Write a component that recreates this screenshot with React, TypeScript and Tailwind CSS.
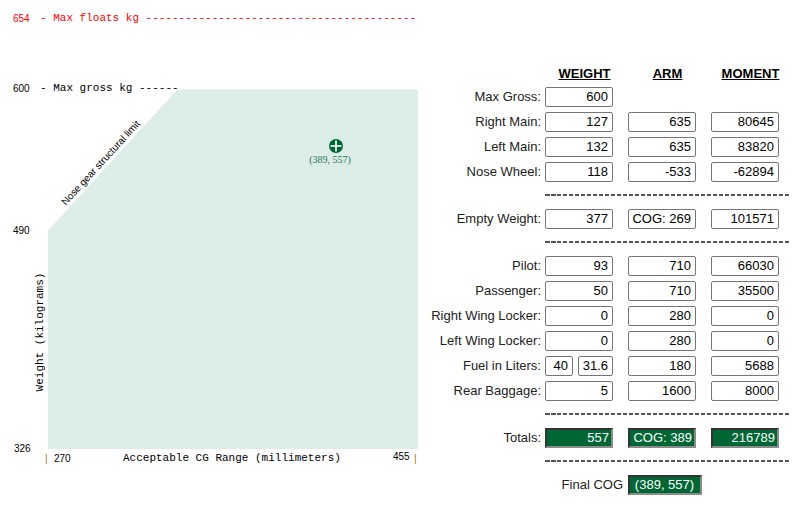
import React from "react";

const sans = "font-['Liberation_Sans',Arial,sans-serif]";
const mono = "font-['Liberation_Mono','Courier_New',monospace]";

function Box({ v, w = "w-[68px]" }: { v: string; w?: string }) {
  return (
    <div
      className={`${w} h-[20px] box-border border border-[#767676] rounded-[2px] bg-white text-right pr-[4px] text-[13px] leading-[18px] text-black whitespace-nowrap`}
    >
      {v}
    </div>
  );
}

function GreenBox({ v, w = "w-[68px]", align = "text-right" }: { v: string; w?: string; align?: string }) {
  return (
    <div
      className={`${w} h-[20px] box-border border-2 border-t-[#333] border-l-[#333] border-r-[#8c8c8c] border-b-[#8c8c8c] bg-[#006633] ${align} pl-[1px] pr-[2px] text-[13px] leading-[16px] text-white whitespace-nowrap overflow-hidden`}
    >
      {v}
    </div>
  );
}

function Row({ label, children }: { label: string; children: React.ReactNode }) {
  return (
    <div className="flex h-[25px] items-center">
      <div className="w-[124px] pr-[4px] text-right text-[13px] text-[#222]">{label}</div>
      {children}
    </div>
  );
}

function Cell({ children }: { children?: React.ReactNode }) {
  return <div className="w-[83px] flex">{children}</div>;
}

function Dash() {
  return (
    <div className="h-[22px] flex items-center">
      <div className="ml-[124px] w-[245px] h-[2px] bg-[repeating-linear-gradient(to_right,#555_0px,#555_4.5px,transparent_4.5px,transparent_6px)]" />
    </div>
  );
}

const rows1: [string, string, string, string][] = [
  ["Right Main:", "127", "635", "80645"],
  ["Left Main:", "132", "635", "83820"],
  ["Nose Wheel:", "118", "-533", "-62894"],
];

const rows2: [string, string, string, string][] = [
  ["Pilot:", "93", "710", "66030"],
  ["Passenger:", "50", "710", "35500"],
  ["Right Wing Locker:", "0", "280", "0"],
  ["Left Wing Locker:", "0", "280", "0"],
];

function Chart() {
  return (
    <div className={`relative w-[421px] h-[520px] shrink-0 ${sans}`}>
      <svg className="absolute inset-0" width="421" height="520" viewBox="0 0 421 520">
        <polygon points="48,449 48,230.5 177.5,89.5 418,89.5 418,449" fill="#ddede8" />
        <circle cx="336" cy="146" r="7" fill="#006633" />
        <line x1="330.5" y1="146" x2="341.5" y2="146" stroke="#fff" strokeWidth="1.6" />
        <line x1="336" y1="140.5" x2="336" y2="151.5" stroke="#fff" strokeWidth="1.6" />
      </svg>

      <div className="absolute left-[13px] top-[14px] text-[10px] leading-[10px] text-[#ff0000]">654</div>
      <div className={`absolute left-[40px] top-[13px] text-[11px] leading-[11px] text-[#ff0000] whitespace-pre ${mono}`}>
        {"- Max floats kg -----------------------------------------"}
      </div>

      <div className="absolute left-[13px] top-[84px] text-[10px] leading-[10px] text-black">600</div>
      <div className={`absolute left-[40px] top-[83px] text-[11px] leading-[11px] text-black whitespace-pre ${mono}`}>
        {"- Max gross kg ------"}
      </div>

      <div className="absolute left-[13px] top-[226px] text-[10px] leading-[10px] text-black">490</div>
      <div className="absolute left-[14px] top-[444px] text-[10px] leading-[10px] text-black">326</div>

      <div className="absolute left-[45px] top-[454px] text-[10px] leading-[10px] text-[#9a7010]">|</div>
      <div className="absolute left-[54px] top-[454px] text-[10px] leading-[10px] text-black">270</div>
      <div className={`absolute left-[123px] top-[453px] text-[11px] leading-[11px] text-black whitespace-pre ${mono}`}>
        Acceptable CG Range (millimeters)
      </div>
      <div className="absolute left-[393px] top-[452px] text-[10px] leading-[10px] text-black">455</div>
      <div className="absolute left-[414px] top-[454px] text-[10px] leading-[10px] text-[#9a7010]">|</div>

      <div
        className={`absolute left-[40px] top-[332px] -translate-x-1/2 -translate-y-1/2 -rotate-90 text-[11px] leading-[11px] text-black whitespace-pre ${mono}`}
      >
        Weight (kilograms)
      </div>

      <div className="absolute left-[101px] top-[163px] -translate-x-1/2 -translate-y-1/2 -rotate-[47.5deg] text-[10px] leading-[10px] text-black whitespace-pre">
        Nose gear structural limit
      </div>

      <div className="absolute left-[330px] top-[160px] -translate-x-1/2 -translate-y-1/2 text-[10px] leading-[10px] text-[#1d7a4c] whitespace-pre font-['Liberation_Serif','Times_New_Roman',serif]">
        (389, 557)
      </div>
    </div>
  );
}

function Table() {
  return (
    <div className={`pt-[64px] ${sans} text-[13px]`}>
      <div className="flex h-[20px] items-center">
        <div className="w-[124px]" />
        <div className="w-[83px] pr-[4px] text-center font-bold underline">WEIGHT</div>
        <div className="w-[83px] pr-[4px] text-center font-bold underline">ARM</div>
        <div className="w-[83px] pr-[4px] text-center font-bold underline">MOMENT</div>
      </div>
      <Row label="Max Gross:">
        <Cell>
          <Box v="600" />
        </Cell>
      </Row>
      {rows1.map((r) => (
        <Row key={r[0]} label={r[0]}>
          <Cell>
            <Box v={r[1]} />
          </Cell>
          <Cell>
            <Box v={r[2]} />
          </Cell>
          <Cell>
            <Box v={r[3]} />
          </Cell>
        </Row>
      ))}
      <Dash />
      <Row label="Empty Weight:">
        <Cell>
          <Box v="377" />
        </Cell>
        <Cell>
          <Box v="COG: 269" />
        </Cell>
        <Cell>
          <Box v="101571" />
        </Cell>
      </Row>
      <Dash />
      {rows2.map((r) => (
        <Row key={r[0]} label={r[0]}>
          <Cell>
            <Box v={r[1]} />
          </Cell>
          <Cell>
            <Box v={r[2]} />
          </Cell>
          <Cell>
            <Box v={r[3]} />
          </Cell>
        </Row>
      ))}
      <Row label="Fuel in Liters:">
        <Cell>
          <div className="flex gap-[5px]">
            <Box v="40" w="w-[28px]" />
            <Box v="31.6" w="w-[35px]" />
          </div>
        </Cell>
        <Cell>
          <Box v="180" />
        </Cell>
        <Cell>
          <Box v="5688" />
        </Cell>
      </Row>
      <Row label="Rear Baggage:">
        <Cell>
          <Box v="5" />
        </Cell>
        <Cell>
          <Box v="1600" />
        </Cell>
        <Cell>
          <Box v="8000" />
        </Cell>
      </Row>
      <Dash />
      <Row label="Totals:">
        <Cell>
          <GreenBox v="557" />
        </Cell>
        <Cell>
          <GreenBox v="COG: 389" />
        </Cell>
        <Cell>
          <GreenBox v="216789" />
        </Cell>
      </Row>
      <Dash />
      <div className="flex h-[25px] items-center">
        <div className="w-[124px]" />
        <div className="w-[83px] pr-[5px] text-right text-[13px] text-[#222]">Final COG</div>
        <GreenBox v="(389, 557)" w="w-[74px]" align="text-center" />
      </div>
    </div>
  );
}

export default function App() {
  return (
    <div className="w-[805px] h-[520px] bg-white flex overflow-hidden">
      <Chart />
      <Table />
    </div>
  );
}
